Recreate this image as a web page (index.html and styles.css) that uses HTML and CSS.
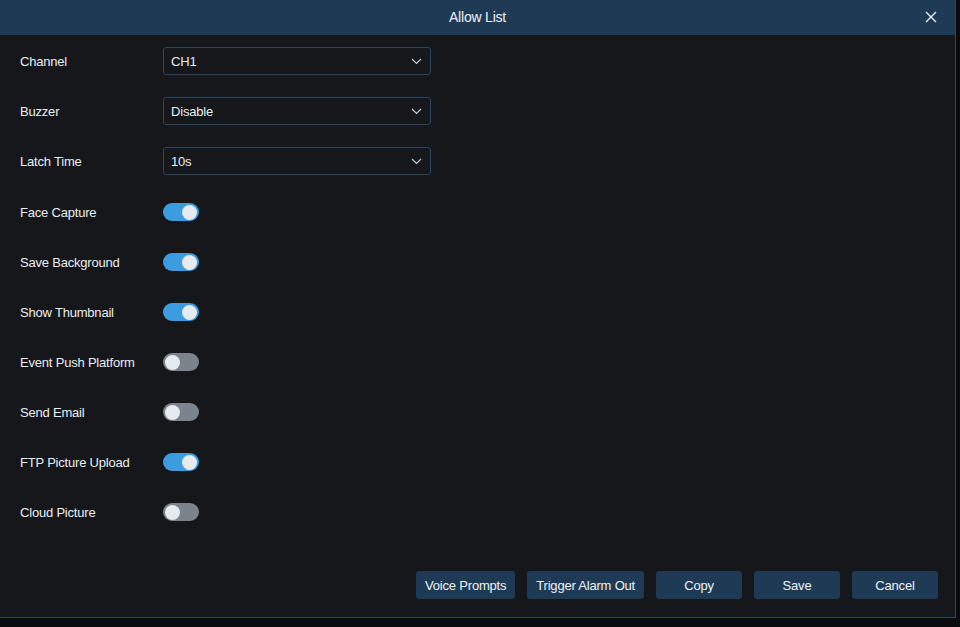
FILE: index.html
```html
<!DOCTYPE html>
<html lang="en">
<head>
    <meta charset="UTF-8">
    <meta name="viewport" content="width=device-width, initial-scale=1.0">
    <title>Allow List</title>
    <link rel="stylesheet" href="styles.css">
</head>
<body>
    <div class="dialog">
        <div class="dialog-header">
            <span class="dialog-title">Allow List</span>
            <button class="close-btn" aria-label="Close">
                <svg width="12" height="12" viewBox="0 0 12 12"><path d="M1 1L11 11M11 1L1 11" stroke="#e8eef4" stroke-width="1.4" fill="none"/></svg>
            </button>
        </div>

        <div class="dialog-body">
            <div class="row">
                <label>Channel</label>
                <div class="select"><span>CH1</span><svg class="chevron" width="11" height="7" viewBox="0 0 11 7"><path d="M1 1L5.5 5.5L10 1" stroke="#c4ccd6" stroke-width="1.2" fill="none"/></svg></div>
            </div>
            <div class="row">
                <label>Buzzer</label>
                <div class="select"><span>Disable</span><svg class="chevron" width="11" height="7" viewBox="0 0 11 7"><path d="M1 1L5.5 5.5L10 1" stroke="#c4ccd6" stroke-width="1.2" fill="none"/></svg></div>
            </div>
            <div class="row">
                <label>Latch Time</label>
                <div class="select"><span>10s</span><svg class="chevron" width="11" height="7" viewBox="0 0 11 7"><path d="M1 1L5.5 5.5L10 1" stroke="#c4ccd6" stroke-width="1.2" fill="none"/></svg></div>
            </div>

            <div class="switch-group">
                <div class="row">
                    <label>Face Capture</label>
                    <span class="switch on"></span>
                </div>
                <div class="row">
                    <label>Save Background</label>
                    <span class="switch on"></span>
                </div>
                <div class="row">
                    <label>Show Thumbnail</label>
                    <span class="switch on"></span>
                </div>
                <div class="row">
                    <label>Event Push Platform</label>
                    <span class="switch"></span>
                </div>
                <div class="row">
                    <label>Send Email</label>
                    <span class="switch"></span>
                </div>
                <div class="row">
                    <label>FTP Picture Upload</label>
                    <span class="switch on"></span>
                </div>
                <div class="row">
                    <label>Cloud Picture</label>
                    <span class="switch"></span>
                </div>
            </div>
        </div>

        <div class="dialog-footer">
            <button class="btn">Voice Prompts</button>
            <button class="btn">Trigger Alarm Out</button>
            <button class="btn wide">Copy</button>
            <button class="btn wide">Save</button>
            <button class="btn wide">Cancel</button>
        </div>
    </div>
</body>
</html>
```

FILE: styles.css
```css
body {
    margin: 0;
    background-color: #0a0b0d;
    font-family: "Liberation Sans", Arial, sans-serif;
    font-size: 13px;
    letter-spacing: -0.2px;
    color: #e9edf2;
}
.dialog {
    width: 955px;
    height: 617px;
    background-color: #16171b;
    border-right: 1px solid #2a4663;
    border-bottom: 1px solid #2a4663;
    display: flex;
    flex-direction: column;
}
.dialog-header {
    height: 35px;
    padding-bottom: 1px;
    box-sizing: border-box;
    background-color: #1f3a55;
    display: flex;
    align-items: center;
    justify-content: center;
    position: relative;
}
.dialog-title {
    font-size: 14px;
    color: #eef2f6;
}
.close-btn {
    position: absolute;
    right: 18px;
    top: 11px;
    background: none;
    border: none;
    padding: 0;
    cursor: pointer;
    line-height: 0;
}
.dialog-body {
    flex: 1;
    padding-top: 1px;
}
.switch-group {
    padding-top: 1px;
}
.row {
    height: 50px;
    display: flex;
    align-items: center;
    padding-left: 20px;
}
.row label {
    width: 143px;
}
.select {
    width: 251px;
    height: 26px;
    border: 1px solid #2b4560;
    border-radius: 3px;
    display: flex;
    align-items: center;
    justify-content: space-between;
    padding: 0 8px 0 7px;
}
.chevron {
    margin-top: 1px;
}
.switch {
    width: 36px;
    height: 18px;
    border-radius: 9px;
    background-color: #7b838c;
    position: relative;
}
.switch::after {
    content: "";
    position: absolute;
    top: 1.5px;
    left: 2px;
    width: 15px;
    height: 15px;
    border-radius: 50%;
    background-color: #e6ebf0;
}
.switch.on {
    background-color: #3b9de0;
}
.switch.on::after {
    left: 19px;
}
.dialog-footer {
    display: flex;
    justify-content: flex-end;
    gap: 12px;
    padding: 0 17px 18px 0;
}
.btn {
    height: 28px;
    padding: 0 9px;
    background-color: #1f3a55;
    color: #eef2f6;
    border: none;
    border-radius: 3px;
    font-family: "Liberation Sans", Arial, sans-serif;
    font-size: 13px;
    letter-spacing: -0.2px;
    cursor: pointer;
}
.btn.wide {
    width: 86px;
}
```
